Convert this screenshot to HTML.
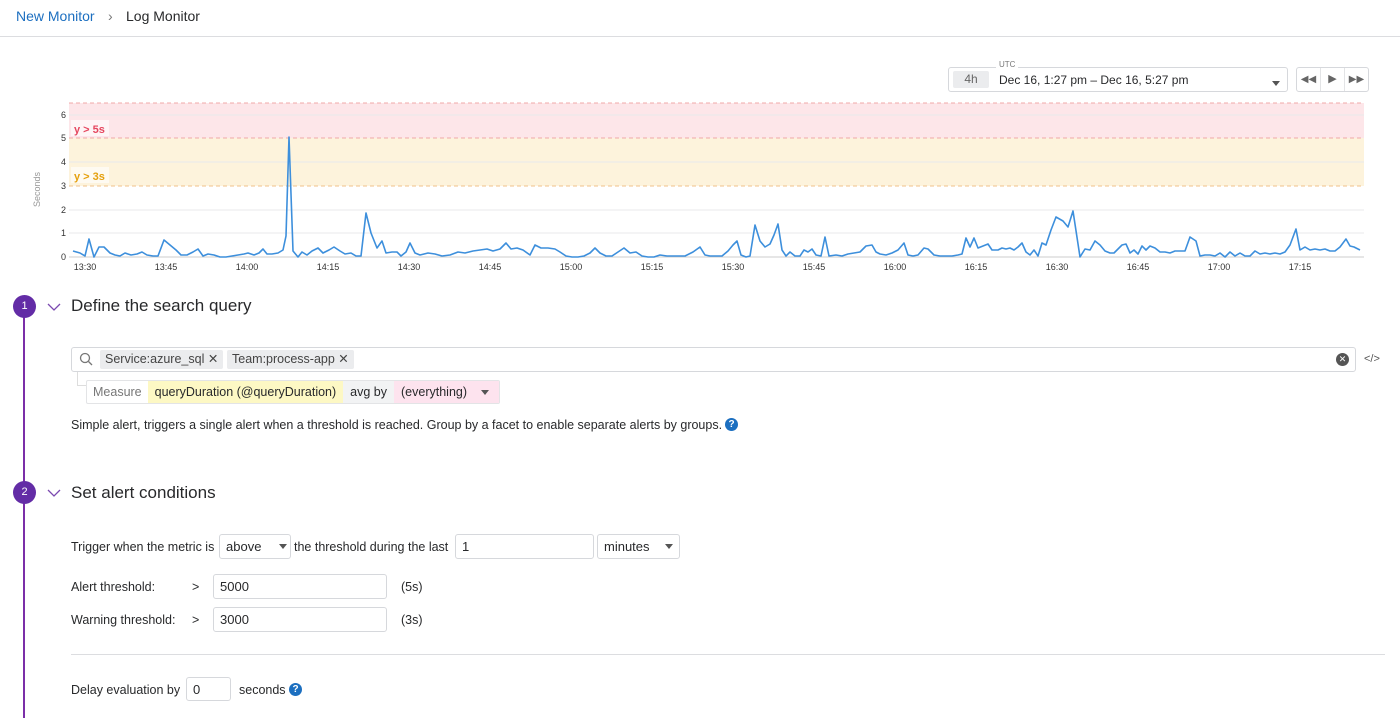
<!DOCTYPE html>
<html><head><meta charset="utf-8"><style>
*{box-sizing:border-box;margin:0;padding:0}
body{width:1400px;height:718px;overflow:hidden;background:#fff;font-family:"Liberation Sans",sans-serif;color:#28292b;position:relative;font-size:13px}
.a{position:absolute}
.inp{position:absolute;border:1px solid #d6d8dc;border-radius:3px;background:#fff;font-size:13px;padding-left:6px;display:flex;align-items:center}
.tri{display:inline-block;width:0;height:0;border-left:4px solid transparent;border-right:4px solid transparent;border-top:5px solid #555}
</style></head><body>
<div class="a" style="left:16px;top:8px;font-size:14px;color:#1c6fc0">New Monitor</div>
<div class="a" style="left:108px;top:8px;font-size:14px;color:#777">›</div>
<div class="a" style="left:126px;top:8px;font-size:14px;color:#28292b">Log Monitor</div>
<div class="a" style="left:0;top:36px;width:1400px;height:1px;background:#dcdde0"></div>

<div class="a" style="left:948px;top:67px;width:340px;height:25px;border:1px solid #d6d8dc;border-radius:3px"></div>
<div class="a" style="left:996px;top:60px;font-size:8px;color:#777;background:#fff;padding:0 3px">UTC</div>
<div class="a" style="left:953px;top:71px;width:36px;height:17px;background:#ebecee;border-radius:2px;font-size:12px;color:#666;text-align:center;line-height:17px">4h</div>
<div class="a" style="left:999px;top:73px;font-size:12px">Dec 16, 1:27 pm – Dec 16, 5:27 pm</div>
<div class="a" style="left:1272px;top:74px"><span class="tri"></span></div>
<div class="a" style="left:1296px;top:67px;width:73px;height:25px;border:1px solid #d6d8dc;border-radius:3px;display:flex">
<div style="flex:1;border-right:1px solid #e3e4e6;text-align:center;font-size:10px;color:#666;line-height:23px">◀◀</div>
<div style="flex:1;border-right:1px solid #e3e4e6;text-align:center;font-size:11px;color:#666;line-height:23px">▶</div>
<div style="flex:1;text-align:center;font-size:10px;color:#666;line-height:23px">▶▶</div></div>

<svg class="a" style="left:0;top:95px" width="1400" height="185">
<rect x="69" y="8" width="1295" height="35" fill="#fde6e9"/>
<rect x="69" y="43" width="1295" height="48" fill="#fdf3dc"/>
<g stroke="#e8e9eb" stroke-width="1">
<line x1="69" y1="20" x2="1364" y2="20"/><line x1="69" y1="67" x2="1364" y2="67"/><line x1="69" y1="115" x2="1364" y2="115"/><line x1="69" y1="138" x2="1364" y2="138"/></g>
<g stroke="#f0a8a8" stroke-dasharray="4,3"><line x1="69" y1="8" x2="1364" y2="8"/><line x1="69" y1="43" x2="1364" y2="43"/></g>
<line x1="69" y1="91" x2="1364" y2="91" stroke="#f0c08a" stroke-dasharray="4,3"/>
<line x1="69" y1="162" x2="1364" y2="162" stroke="#ccc"/>
<rect x="71" y="25" width="38" height="16" fill="#fff" opacity=".6"/>
<rect x="71" y="72" width="38" height="16" fill="#fff" opacity=".6"/>
<text x="74" y="38" font-size="11" font-weight="bold" fill="#e5475f" font-family="Liberation Sans">y &gt; 5s</text>
<text x="74" y="85" font-size="11" font-weight="bold" fill="#e5a00d" font-family="Liberation Sans">y &gt; 3s</text>
<g font-size="9" fill="#333" font-family="Liberation Sans" text-anchor="end">
<text x="66" y="23">6</text><text x="66" y="46">5</text><text x="66" y="70">4</text><text x="66" y="94">3</text><text x="66" y="118">2</text><text x="66" y="141">1</text><text x="66" y="165">0</text></g>
<text transform="translate(40,112) rotate(-90)" font-size="9" fill="#999" font-family="Liberation Sans">Seconds</text>
<g font-size="9" fill="#333" font-family="Liberation Sans" text-anchor="middle">
<text x="85" y="175">13:30</text><text x="166" y="175">13:45</text><text x="247" y="175">14:00</text><text x="328" y="175">14:15</text><text x="409" y="175">14:30</text><text x="490" y="175">14:45</text><text x="571" y="175">15:00</text><text x="652" y="175">15:15</text><text x="733" y="175">15:30</text><text x="814" y="175">15:45</text><text x="895" y="175">16:00</text><text x="976" y="175">16:15</text><text x="1057" y="175">16:30</text><text x="1138" y="175">16:45</text><text x="1219" y="175">17:00</text><text x="1300" y="175">17:15</text></g>
<polyline fill="none" stroke="#3d8fdc" stroke-width="1.6" stroke-linejoin="round" points="73,156 80,158 85,161 89,144 94,162 99,152 104,152 110,158 115,160 120,161 125,158 131,160 137,159 142,157 147,160 153,161 158,161 164,145 170,150 176,155 181,160 187,160 193,157 198,154 203,161 208,159 214,160 220,162 226,162 232,161 238,160 244,159 248,158 254,160 259,158 263,154 267,159 272,159 278,158 283,155 286,141 289,42 293,156 298,162 302,157 307,160 312,156 318,153 323,158 329,155 334,152 340,156 345,159 351,158 356,161 361,161 366,118 371,138 377,153 382,146 386,158 392,157 397,157 401,161 406,157 410,148 415,158 420,160 428,158 435,159 442,161 450,160 458,157 465,158 473,156 480,155 487,154 493,156 500,154 506,148 511,154 517,153 523,155 530,160 535,150 541,153 548,153 555,154 560,157 566,161 572,162 578,162 584,161 590,158 595,153 600,158 606,161 612,161 618,157 624,153 630,158 636,157 642,161 648,162 654,162 660,160 667,161 675,161 685,161 693,157 700,152 705,160 710,161 715,161 722,161 728,156 733,150 737,146 741,160 746,162 750,161 755,130 760,146 765,152 770,149 774,140 778,129 782,155 786,161 790,157 795,161 800,161 804,155 808,157 812,154 816,160 821,161 825,142 829,161 836,160 842,161 848,159 854,158 860,157 866,151 872,150 876,157 880,159 886,160 892,158 898,155 904,148 908,160 913,161 918,160 924,153 928,154 934,160 940,161 946,161 952,161 958,160 962,159 966,143 970,152 974,143 978,153 983,151 988,149 992,155 998,155 1002,153 1006,154 1010,153 1014,155 1018,152 1022,148 1026,157 1030,160 1034,155 1038,161 1042,148 1046,150 1051,135 1056,122 1063,126 1068,132 1073,116 1080,162 1085,154 1090,155 1095,146 1100,150 1105,156 1110,158 1114,158 1118,154 1122,150 1126,149 1130,158 1134,155 1138,159 1142,151 1146,155 1150,151 1155,153 1160,157 1165,157 1170,158 1175,156 1180,156 1185,156 1190,142 1196,146 1200,161 1205,160 1210,160 1215,161 1220,158 1225,162 1230,157 1235,161 1240,158 1245,161 1250,161 1255,156 1260,159 1265,158 1270,159 1275,158 1280,159 1285,157 1290,150 1296,134 1300,155 1305,152 1310,155 1315,154 1320,155 1325,154 1330,156 1335,156 1340,152 1346,144 1350,151 1354,152 1360,155"/>
</svg>

<div class="a" style="left:23px;top:306px;width:2px;height:412px;background:#7b2fa8"></div>
<div class="a" style="left:13px;top:295px;width:23px;height:23px;border-radius:50%;background:#632ca6;color:#fff;font-size:11px;text-align:center;line-height:23px">1</div>
<div class="a" style="left:13px;top:481px;width:23px;height:23px;border-radius:50%;background:#632ca6;color:#fff;font-size:11px;text-align:center;line-height:23px">2</div>
<svg class="a" style="left:47px;top:302px" width="14" height="10"><path d="M1 2 L7 8 L13 2" fill="none" stroke="#7b4ab0" stroke-width="1.3"/></svg>
<svg class="a" style="left:47px;top:488px" width="14" height="10"><path d="M1 2 L7 8 L13 2" fill="none" stroke="#7b4ab0" stroke-width="1.3"/></svg>
<div class="a" style="left:71px;top:296px;font-size:17px">Define the search query</div>
<div class="a" style="left:71px;top:483px;font-size:17px">Set alert conditions</div>

<div class="a" style="left:71px;top:347px;width:1285px;height:25px;border:1px solid #d6d8dc;border-radius:3px"></div>
<svg class="a" style="left:79px;top:352px" width="14" height="14"><circle cx="6" cy="6" r="4.5" fill="none" stroke="#777" stroke-width="1.3"/><line x1="9.5" y1="9.5" x2="13" y2="13" stroke="#777" stroke-width="1.3"/></svg>
<div class="a" style="left:100px;top:350px;height:19px;background:#ebecee;border-radius:2px;padding:0 5px;font-size:12.5px;line-height:19px;color:#444">Service:azure_sql ✕</div>
<div class="a" style="left:227px;top:350px;height:19px;background:#ebecee;border-radius:2px;padding:0 5px;font-size:12.5px;line-height:19px;color:#444">Team:process-app ✕</div>
<div class="a" style="left:1336px;top:353px;width:13px;height:13px;border-radius:50%;background:#555;color:#fff;font-size:9px;text-align:center;line-height:13px">✕</div>
<div class="a" style="left:1364px;top:353px;font-size:11px;color:#555">&lt;/&gt;</div>
<div class="a" style="left:77px;top:372px;width:10px;height:14px;border-left:1px solid #ddd;border-bottom:1px solid #ddd"></div>
<div class="a" style="left:86px;top:380px;height:24px;border:1px solid #e3e4e6;border-radius:2px;display:flex;font-size:12.5px;line-height:22px">
<div style="padding:0 6px;color:#777">Measure</div>
<div style="padding:0 7px;background:#fdf8c4">queryDuration (@queryDuration)</div>
<div style="padding:0 7px;background:#f2f3f4">avg by</div>
<div style="padding:0 10px 0 7px;background:#fde3ee">(everything) &nbsp;&nbsp;&nbsp;<span class="tri" style="vertical-align:middle"></span></div></div>
<div class="a" style="left:71px;top:418px;font-size:12.5px">Simple alert, triggers a single alert when a threshold is reached. Group by a facet to enable separate alerts by groups.</div>
<div class="a" style="left:725px;top:418px;width:13px;height:13px;border-radius:50%;background:#1c6fc0;color:#fff;font-size:10px;font-weight:bold;text-align:center;line-height:13px">?</div>

<div class="a" style="left:71px;top:540px;font-size:12.5px">Trigger when the metric is</div>
<div class="inp" style="left:219px;top:534px;width:72px;height:25px">above<span class="tri" style="margin-left:18px"></span></div>
<div class="a" style="left:294px;top:540px;font-size:12.5px">the threshold during the last</div>
<div class="inp" style="left:455px;top:534px;width:139px;height:25px">1</div>
<div class="inp" style="left:597px;top:534px;width:83px;height:25px">minutes<span class="tri" style="margin-left:15px"></span></div>
<div class="a" style="left:71px;top:580px;font-size:12.5px">Alert threshold:</div>
<div class="a" style="left:192px;top:580px;font-size:12.5px">&gt;</div>
<div class="inp" style="left:213px;top:574px;width:174px;height:25px">5000</div>
<div class="a" style="left:401px;top:580px;font-size:12.5px">(5s)</div>
<div class="a" style="left:71px;top:613px;font-size:12.5px">Warning threshold:</div>
<div class="a" style="left:192px;top:613px;font-size:12.5px">&gt;</div>
<div class="inp" style="left:213px;top:607px;width:174px;height:25px">3000</div>
<div class="a" style="left:401px;top:613px;font-size:12.5px">(3s)</div>
<div class="a" style="left:71px;top:654px;width:1314px;height:1px;background:#dcdde0"></div>
<div class="a" style="left:71px;top:683px;font-size:12.5px">Delay evaluation by</div>
<div class="inp" style="left:186px;top:677px;width:45px;height:24px">0</div>
<div class="a" style="left:239px;top:683px;font-size:12.5px">seconds</div>
<div class="a" style="left:289px;top:683px;width:13px;height:13px;border-radius:50%;background:#1c6fc0;color:#fff;font-size:10px;font-weight:bold;text-align:center;line-height:13px">?</div>
</body></html>
